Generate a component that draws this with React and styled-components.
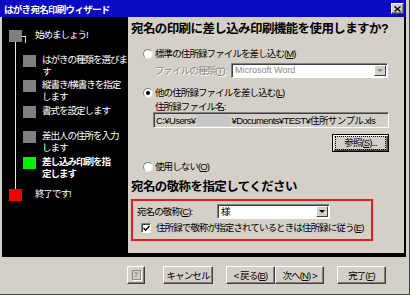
import React from "react";
import styled, { createGlobalStyle } from "styled-components";

const FACE = "#d4d0c8";
const JP = '"Liberation Sans", "Noto Sans CJK JP", sans-serif';

const Global = createGlobalStyle`
  html, body { margin: 0; padding: 0; background: ${FACE}; overflow: hidden; }
  body { font-family: ${JP}; color: #000; }
`;

const Window = styled.div`
  width: 410px;
  height: 295px;
  box-sizing: border-box;
  background: ${FACE};
  display: flex;
  flex-direction: column;
  border-right: 1px solid #404040;
  border-bottom: 1px solid #404040;
  padding-right: 3px;
`;

/* title bar */
const TitleBar = styled.div`
  height: 17px;
  flex: none;
  background: #0a0ac4;
  display: flex;
  align-items: center;
  justify-content: space-between;
  padding: 0 2px 0 4px;
`;

const Title = styled.span`
  color: #fff;
  font-weight: 700;
  font-size: 9.5px;
  letter-spacing: -0.7px;
  white-space: nowrap;
`;

const CloseBtn = styled.span`
  width: 13px;
  height: 11px;
  box-sizing: border-box;
  background: ${FACE};
  border: 1px solid;
  border-color: #fff #404040 #404040 #fff;
  box-shadow: inset -1px -1px #808080;
  display: flex;
  align-items: center;
  justify-content: center;
`;

/* body */
const Body = styled.div`
  height: 240px;
  flex: none;
  margin-left: 2px;
  background: #000;
  display: flex;
  padding: 0 2px 4px 0;
  box-sizing: border-box;
`;

const Steps = styled.div`
  width: 126px;
  flex: none;
  position: relative;
  padding-top: 13px;
  box-sizing: border-box;
`;

const Trunk = styled.div`
  position: absolute;
  left: 13px;
  top: 25px;
  width: 1px;
  height: 147px;
  background: #e8e8e8;
`;

const Elbow = styled.div`
  position: absolute;
  left: 20px;
  top: 19px;
  width: 3px;
  height: 6px;
  border-top: 1px solid #e8e8e8;
  border-right: 1px solid #e8e8e8;
`;

const StepRow = styled.div`
  height: ${(p) => p.$h}px;
  display: flex;
  align-items: flex-start;
  padding-left: ${(p) => (p.$child ? 21 : 7)}px;
`;

const Square = styled.span`
  width: 13px;
  height: 12px;
  flex: none;
  background: ${(p) => p.$color || "#808080"};
  margin-right: ${(p) => (p.$child ? 6 : 13)}px;
  position: relative;
  z-index: 1;
`;

const StepText = styled.span`
  color: #fff;
  font-size: 9.5px;
  letter-spacing: -1px;
  line-height: 12px;
  margin-top: -1px;
  white-space: nowrap;
  font-weight: ${(p) => (p.$bold ? 700 : 400)};
`;

/* right content */
const Content = styled.div`
  flex: 1;
  background: ${FACE};
  padding: 4px 0 0 3px;
  display: flex;
  flex-direction: column;
`;

const Heading = styled.div`
  height: 16px;
  line-height: 16px;
  font-size: 12.5px;
  font-weight: 700;
  letter-spacing: -0.6px;
  white-space: nowrap;
  margin-top: ${(p) => p.$mt || 0}px;
`;

const Text = styled.span`
  font-size: 9.5px;
  letter-spacing: -0.9px;
  line-height: 12px;
  white-space: nowrap;
  color: ${(p) => (p.$disabled ? "#8a8a8a" : "#000")};
  text-shadow: ${(p) => (p.$disabled ? "1px 1px #fff" : "none")};
  width: ${(p) => (p.$w ? `${p.$w}px` : "auto")};
  flex: none;
`;

const OptionRow = styled.div`
  height: 12px;
  display: flex;
  align-items: center;
  padding-left: 12px;
  margin-top: ${(p) => p.$mt || 0}px;
`;

const Radio = styled.span`
  width: 10px;
  height: 10px;
  box-sizing: border-box;
  border-radius: 50%;
  background: #fff;
  border: 1px solid;
  border-color: #808080 #e8e8e8 #e8e8e8 #808080;
  margin-right: 2px;
  flex: none;
  display: flex;
  align-items: center;
  justify-content: center;
  &::after {
    content: "";
    width: 4px;
    height: 4px;
    border-radius: 50%;
    background: ${(p) => (p.$on ? "#000" : "transparent")};
  }
`;

const FieldRow = styled.div`
  height: 15px;
  display: flex;
  align-items: center;
  margin: ${(p) => p.$m || "0"};
`;

const Combo = styled.div`
  width: ${(p) => p.$w}px;
  height: 15px;
  box-sizing: border-box;
  background: #fff;
  border: 1px solid;
  border-color: #808080 #fff #fff #808080;
  box-shadow: inset 1px 1px #404040;
  display: flex;
  align-items: center;
  padding: 1px 1px 1px 3px;
  flex: none;
`;

const ComboValue = styled.span`
  flex: 1;
  font-size: ${(p) => (p.$latin ? 9 : 9.5)}px;
  letter-spacing: ${(p) => (p.$latin ? 0 : -0.9)}px;
  color: ${(p) => (p.$disabled ? "#8a8a8a" : "#000")};
  white-space: nowrap;
  line-height: 11px;
`;

const DropBtn = styled.span`
  width: 12px;
  height: 11px;
  box-sizing: border-box;
  background: ${FACE};
  border: 1px solid;
  border-color: #fff #404040 #404040 #fff;
  display: flex;
  align-items: center;
  justify-content: center;
  &::after {
    content: "";
    border-left: 3px solid transparent;
    border-right: 3px solid transparent;
    border-top: 3px solid ${(p) => (p.$disabled ? "#8a8a8a" : "#000")};
  }
`;

const FileBlock = styled.div`
  margin-left: 22px;
  width: 236px;
  display: flex;
  flex-direction: column;
`;

const FileLabel = styled(Text)`
  line-height: 11px;
  height: 11px;
  margin-top: 2px;
  padding-left: 2px;
`;

const PathBox = styled.div`
  height: 16px;
  box-sizing: border-box;
  border: 1px solid;
  border-color: #808080 #fff #fff #808080;
  box-shadow: inset 1px 1px #404040;
  display: flex;
  align-items: center;
  padding-left: 2px;
  font-size: 9.5px;
  letter-spacing: -0.6px;
  white-space: nowrap;
`;

const Redact = styled.span`
  width: 33px;
  height: 11px;
  background: #c6c6c8;
  margin: 0 1px 0 2px;
  flex: none;
`;

const Button = styled.button`
  width: ${(p) => p.$w}px;
  height: 18px;
  flex: none;
  box-sizing: border-box;
  padding: 0;
  background: ${FACE};
  border: 1px solid;
  border-color: #fff #404040 #404040 #fff;
  box-shadow: inset -1px -1px #808080;
  font-family: ${JP};
  font-size: 9.5px;
  letter-spacing: -0.9px;
  color: #000;
  display: flex;
  align-items: center;
  justify-content: center;
  margin-left: ${(p) => p.$ml || 0}px;
  white-space: nowrap;
`;

const DefaultButton = styled(Button)`
  align-self: flex-end;
  margin-top: 6px;
  border-color: #000;
  box-shadow: inset 1px 1px #fff, inset -1px -1px #404040, inset -2px -2px #808080;
`;

const Focus = styled.span`
  border: 1px dotted #000;
  padding: 1px 8px 1px 8px;
  line-height: 10px;
`;

const RedBox = styled.div`
  width: 242px;
  height: 42px;
  box-sizing: border-box;
  border: 2px solid #e01c1c;
  margin-top: 4px;
  display: flex;
  flex-direction: column;
`;

const HonorRow = styled.div`
  height: 15px;
  display: flex;
  align-items: center;
  margin-top: 3px;
  padding-left: 4px;
`;

const CheckRow = styled.div`
  height: 12px;
  display: flex;
  align-items: center;
  margin-top: 3px;
  padding-left: 8px;
`;

const Check = styled.span`
  width: 10px;
  height: 10px;
  box-sizing: border-box;
  background: #fff;
  border: 1px solid;
  border-color: #808080 #fff #fff #808080;
  box-shadow: inset 1px 1px #404040;
  margin-right: 5px;
  flex: none;
  display: flex;
  align-items: center;
  justify-content: center;
`;

/* footer */
const ButtonBar = styled.div`
  flex: 1;
  display: flex;
  align-items: flex-start;
  padding: 9px 0 0 127px;
`;

const HelpIcon = styled.span`
  width: 9px;
  height: 10px;
  box-sizing: border-box;
  border: 1px solid #8a8a8a;
  box-shadow: 1px 1px #fff;
  font-size: 8px;
  font-weight: 700;
  line-height: 8px;
  color: #8a8a8a;
  display: flex;
  align-items: center;
  justify-content: center;
  letter-spacing: 0;
`;

const steps = [
  { h: 25, text: <>始めましょう!</> },
  { h: 25, child: true, text: <>はがきの種類を選びま<br />す</> },
  { h: 26, child: true, text: <>縦書き/横書きを指定<br />します</> },
  { h: 25, child: true, text: <>書式を設定します</> },
  { h: 26, child: true, text: <>差出人の住所を入力<br />します</> },
  { h: 32, child: true, color: "#00f000", bold: true, text: <>差し込み印刷を指<br />定します</> },
  { h: 20, color: "#f00000", text: <>終了です!</> },
];

export default function App() {
  return (
    <>
      <Global />
      <Window>
        <TitleBar>
          <Title>はがき宛名印刷ウィザード</Title>
          <CloseBtn>
            <svg width="7" height="6" viewBox="0 0 7 6">
              <path d="M0.5 0.5 L6.5 5.5 M6.5 0.5 L0.5 5.5" stroke="#000" strokeWidth="1.4" />
            </svg>
          </CloseBtn>
        </TitleBar>

        <Body>
          <Steps>
            <Trunk />
            <Elbow />
            {steps.map((s, i) => (
              <StepRow key={i} $h={s.h} $child={s.child}>
                <Square $child={s.child} $color={s.color} />
                <StepText $bold={s.bold}>{s.text}</StepText>
              </StepRow>
            ))}
          </Steps>

          <Content>
            <Heading>宛名の印刷に差し込み印刷機能を使用しますか?</Heading>

            <OptionRow $mt={11}>
              <Radio />
              <Text>標準の住所録ファイルを差し込む(<u>M</u>)</Text>
            </OptionRow>
            <FieldRow $m="3px 0 0 24px">
              <Text $disabled $w={76}>ファイルの種類(<u>T</u>):</Text>
              <Combo $w={157}>
                <ComboValue $latin $disabled>Microsoft Word</ComboValue>
                <DropBtn $disabled />
              </Combo>
            </FieldRow>

            <OptionRow $mt={9}>
              <Radio $on />
              <Text>他の住所録ファイルを差し込む(<u>L</u>)</Text>
            </OptionRow>
            <FileBlock>
              <FileLabel>住所録ファイル名:</FileLabel>
              <PathBox>
                <span>C:¥Users¥</span>
                <Redact />
                <span>¥Documents¥TEST¥住所サンプル.xls</span>
              </PathBox>
              <DefaultButton $w={57}>
                <Focus>参照(<u>S</u>)...</Focus>
              </DefaultButton>
            </FileBlock>

            <OptionRow $mt={9}>
              <Radio />
              <Text>使用しない(<u>O</u>)</Text>
            </OptionRow>

            <Heading $mt={6}>宛名の敬称を指定してください</Heading>

            <RedBox>
              <HonorRow>
                <Text $w={80}>宛名の敬称(<u>C</u>):</Text>
                <Combo $w={113}>
                  <ComboValue>様</ComboValue>
                  <DropBtn />
                </Combo>
              </HonorRow>
              <CheckRow>
                <Check>
                  <svg width="7" height="7" viewBox="0 0 7 7">
                    <path d="M0.5 3 L2.5 5.2 L6.5 1" fill="none" stroke="#000" strokeWidth="1.5" />
                  </svg>
                </Check>
                <Text>住所録で敬称が指定されているときは住所録に従う(<u>E</u>)</Text>
              </CheckRow>
            </RedBox>
          </Content>
        </Body>

        <ButtonBar>
          <Button $w={18}>
            <HelpIcon>?</HelpIcon>
          </Button>
          <Button $w={50} $ml={18}>キャンセル</Button>
          <Button $w={49} $ml={13}>&lt; 戻る(<u>B</u>)</Button>
          <Button $w={49}>次へ(<u>N</u>) &gt;</Button>
          <Button $w={49} $ml={13}>完了(<u>F</u>)</Button>
        </ButtonBar>
      </Window>
    </>
  );
}
